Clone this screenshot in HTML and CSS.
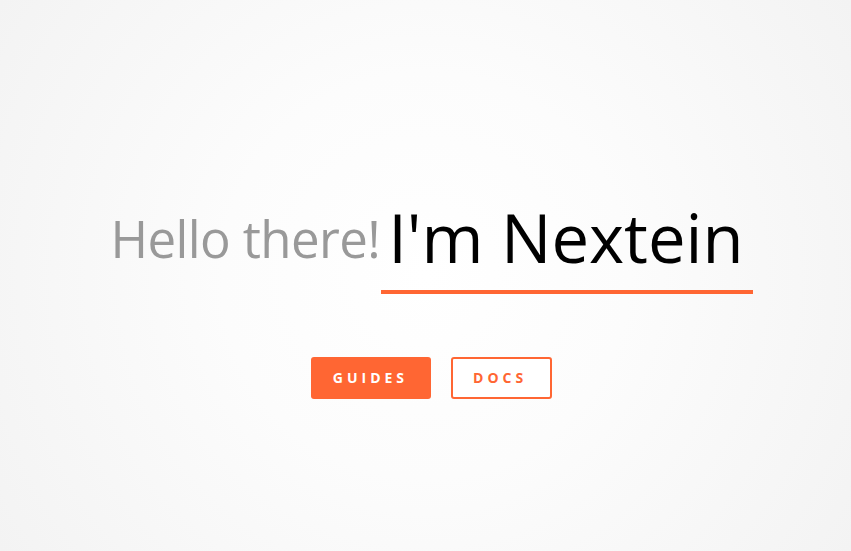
FILE: index.html
```html
<!DOCTYPE html>
<html lang="en">
<head>
  <meta charset="UTF-8">
  <meta name="viewport" content="width=device-width, initial-scale=1.0">
  <title>Nextein</title>
  <link rel="stylesheet" href="styles.css">
</head>
<body>

  <div class="hero">
    <div class="headline">
      <span class="hello">Hello there!</span>
      <h1 class="name">I'm Nextein</h1>
    </div>

    <div class="actions">
      <a class="button primary" href="#">Guides</a>
      <a class="button outline" href="#">Docs</a>
    </div>
  </div>

</body>
</html>
```

FILE: styles.css
```css
html, body {
  height: 100%;
}
body {
  font-family: "Open Sans", "Noto Sans", sans-serif;
  margin: 0;
  background: radial-gradient(circle at 50% 50%, #ffffff 0%, #fcfcfc 40%, #f3f3f3 100%);
  display: flex;
  justify-content: center;
}
.hero {
  display: flex;
  flex-direction: column;
  align-items: center;
  padding-top: 197px;
  padding-left: 12px;
}
.headline {
  display: flex;
  align-items: center;
}
.hello {
  font-size: 51px;
  color: #999;
  letter-spacing: -0.6px;
  margin-bottom: 16px;
}
.name {
  margin: 0 0 0 1px;
  padding: 0 9px 13px 7px;
  font-size: 67px;
  font-weight: 400;
  color: #000;
  border-bottom: 4px solid #ff6633;
  line-height: 1.2;
}
.actions {
  display: flex;
  gap: 20px;
  margin-top: 63px;
}
.button {
  display: block;
  padding: 0 23px 0 22px;
  height: 42px;
  line-height: 42px;
  box-sizing: border-box;
  font-size: 14px;
  font-weight: 700;
  letter-spacing: 4px;
  text-transform: uppercase;
  text-decoration: none;
  border-radius: 3px;
}
.primary {
  background: #ff6633;
  color: #fff;
}
.outline {
  background: #fff;
  color: #ff6633;
  border: 2px solid #ff6633;
  line-height: 38px;
  padding: 0 23px 0 20px;
}
```
